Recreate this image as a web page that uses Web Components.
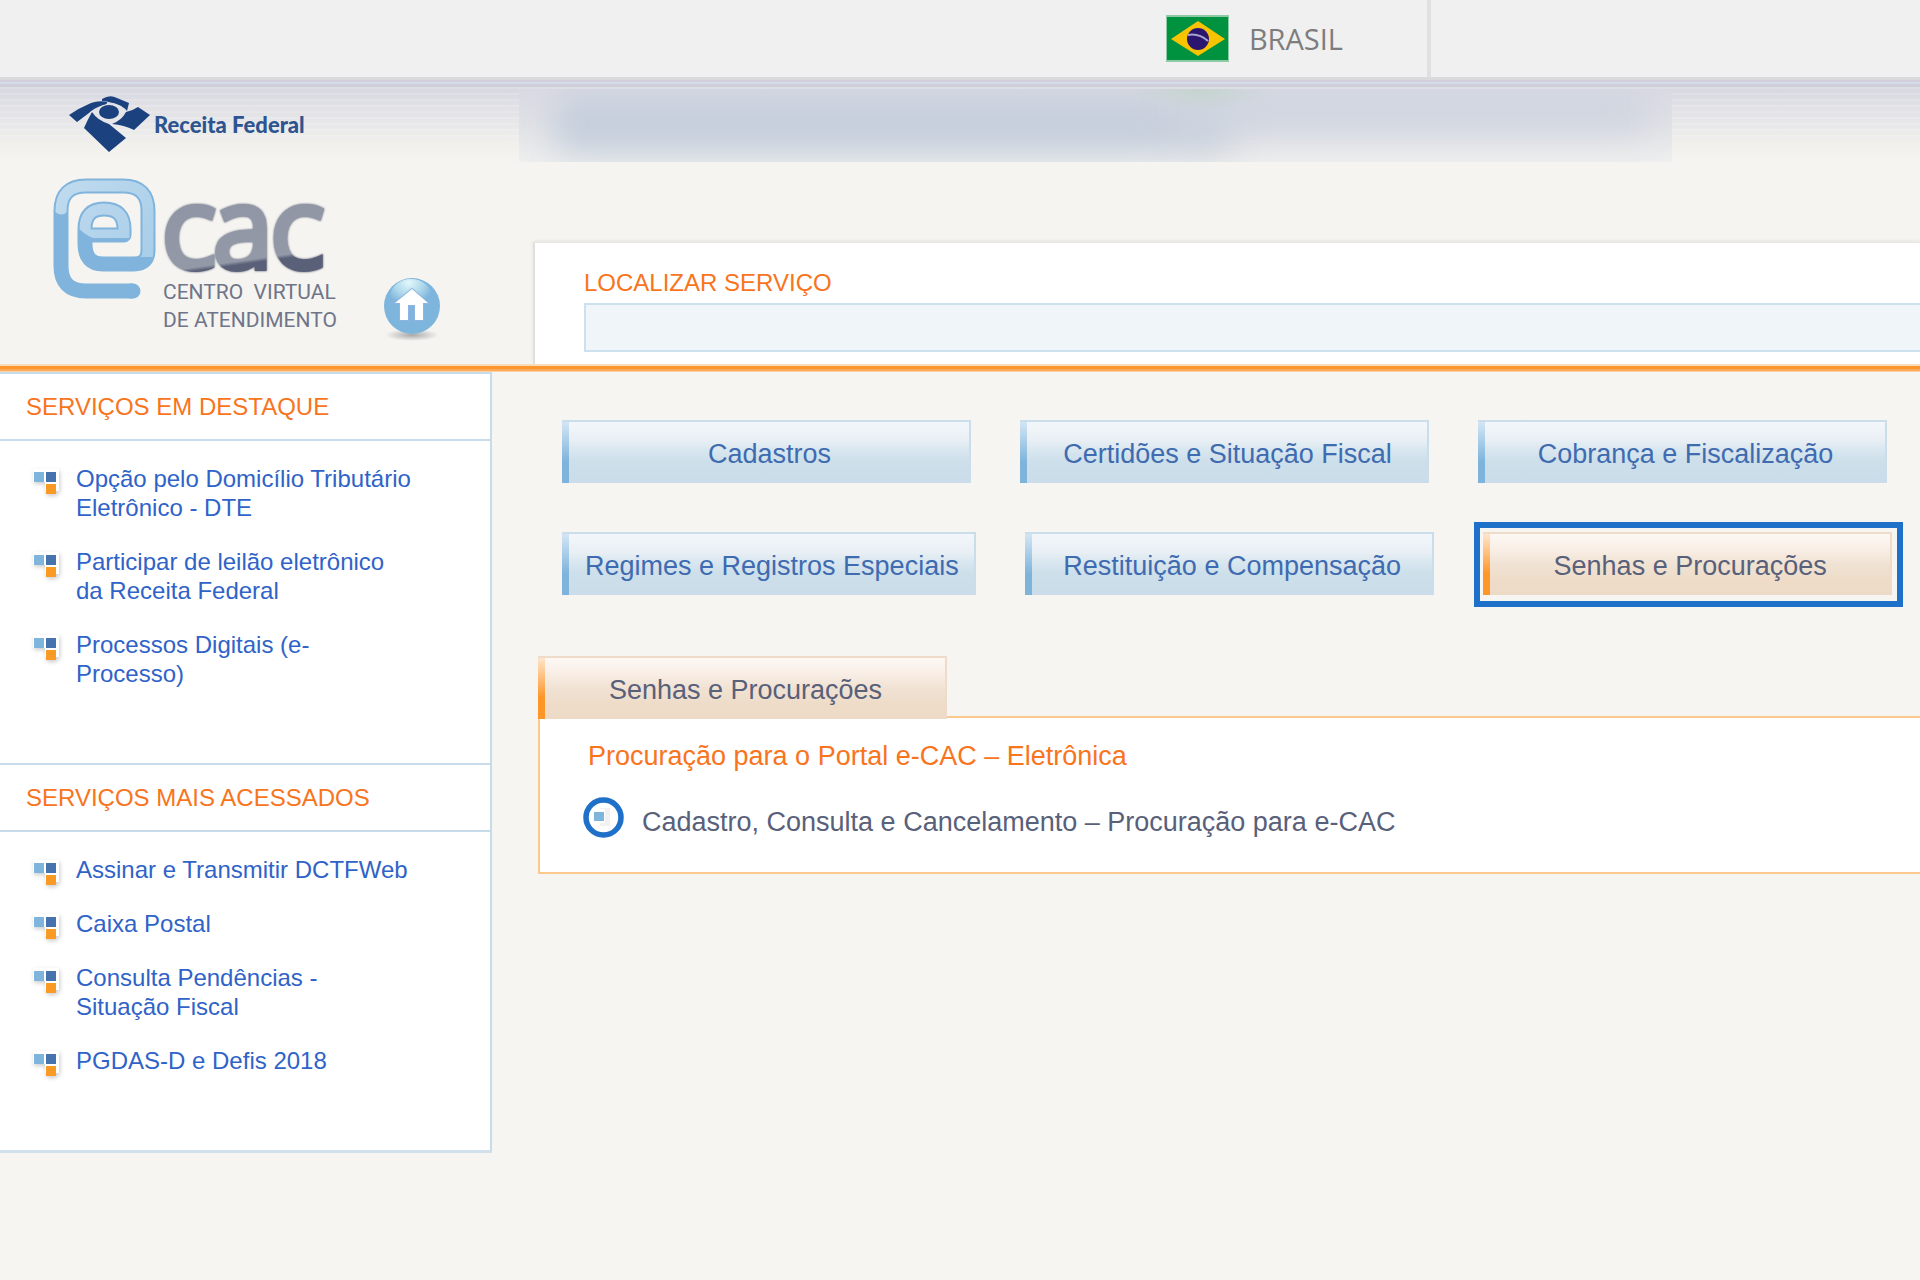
<!DOCTYPE html>
<html lang="pt-BR">
<head>
<meta charset="utf-8">
<meta name="viewport" content="width=device-width, initial-scale=1">
<title>e-CAC - Centro Virtual de Atendimento</title>
<style>
  body {
    margin: 0;
    min-height: 100vh;
    background-color: #f6f5f1;
    font-family: "Liberation Sans", Arial, sans-serif;
    font-size: 24px;
    line-height: 29px;
    --orange: #f8741d;
    --link: #2f63c8;
    --line: #c6dcea;
    --ink: #59607a;
    --mark: #1e70c8;
    --sidebar: 492px;
  }
  .layout {
    display: grid;
    grid-template-columns: var(--sidebar) 1fr;
    align-items: start;
  }
  .categories {
    display: flex;
    flex-wrap: wrap;
    gap: 49px;
    padding: 48px 0 0 70px;
  }
</style>
</head>
<body>
  <brasil-bar></brasil-bar>
  <ecac-header></ecac-header>
  <div class="layout">
    <aside-box>
      <service-group heading="SERVIÇOS EM DESTAQUE">
        <service-link>Opção pelo Domicílio Tributário Eletrônico - DTE</service-link>
        <service-link>Participar de leilão eletrônico da Receita Federal</service-link>
        <service-link>Processos Digitais (e-Processo)</service-link>
      </service-group>
      <service-group heading="SERVIÇOS MAIS ACESSADOS">
        <service-link>Assinar e Transmitir DCTFWeb</service-link>
        <service-link>Caixa Postal</service-link>
        <service-link>Consulta Pendências - Situação Fiscal</service-link>
        <service-link>PGDAS-D e Defis 2018</service-link>
      </service-group>
    </aside-box>
    <main>
      <nav class="categories">
        <category-button>Cadastros</category-button>
        <category-button>Certidões e Situação Fiscal</category-button>
        <category-button>Cobrança e Fiscalização</category-button>
        <category-button>Regimes e Registros Especiais</category-button>
        <category-button>Restituição e Compensação</category-button>
        <category-button active marked>Senhas e Procurações</category-button>
      </nav>
      <service-panel>
        <category-button slot="tab" active>Senhas e Procurações</category-button>
        <span slot="title">Procuração para o Portal e-CAC – Eletrônica</span>
        <panel-link>Cadastro, Consulta e Cancelamento – Procuração para e-CAC</panel-link>
      </service-panel>
    </main>
  </div>

<script>
class EcacElement extends HTMLElement {
  constructor() {
    super();
    this.attachShadow({ mode: 'open' });
  }

  connectedCallback() {
    const template = document.createElement('template');
    template.innerHTML = this.getStyles() + this.getTemplate();
    this.shadowRoot.replaceChildren(template.content.cloneNode(true));
  }
}

class BrasilBar extends EcacElement {
  getTemplate() {
    return `
      <div class="country">
        <svg width="63" height="47" viewBox="0 0 63 47" aria-hidden="true">
          <rect width="63" height="47" fill="#8fcaa6"/>
          <rect x="1" y="2" width="61" height="43" fill="#00923f"/>
          <path d="M5 24 32 6 59 24 32 41Z" fill="#f8c300"/>
          <circle cx="32" cy="24" r="11" fill="#2b166f"/>
          <path d="M22 20Q33 18 42 26" fill="none" stroke="#a9a2cf" stroke-width="2"/>
        </svg>
        <span>BRASIL</span>
      </div>
    `;
  }
  getStyles() {
    return `
      <style>
      :host {
        display: grid;
        grid-template-columns: 1fr 489px;
        height: 77px;
        background-color: #f0f0f0;
      }
      .country {
        display: flex;
        align-items: center;
        justify-content: flex-end;
        gap: 20px;
        padding-right: 84px;
        border-right: 4px solid #e0e0e0;
        font-family: "Open Sans", "Noto Sans", sans-serif;
        font-size: 29px;
        color: #7d7d7d;
      }
      </style>
    `;
  }
}

class EcacHeader extends EcacElement {
  getTemplate() {
    return `
      <header>
        <ecac-brand></ecac-brand>
        <div class="right">
          <user-strip></user-strip>
          <service-search></service-search>
        </div>
      </header>
      <div class="rule"></div>
    `;
  }
  getStyles() {
    return `
      <style>
      :host {
        display: block;
      }
      header {
        display: grid;
        grid-template-columns: var(--sidebar) 1fr;
        height: 287px;
        background:
          linear-gradient(#dadadc 0 3px, #d0cfdb 3px 5px, #d4dce7 5px 7px, #cfcedb 7px 10px, transparent 10px),
          repeating-linear-gradient(transparent 0 4px, rgba(255, 255, 255, .15) 4px 6px) 0 0 / 100% 64px no-repeat,
          linear-gradient(#d7d7e1 10px, #dfdfe5 26px, #e9e9ea 50px, #f2f0ec 68px, #f5f4f0 86px);
      }
      .right {
        display: flex;
        flex-direction: column;
        justify-content: space-between;
      }
      .rule {
        height: 8px;
        background: linear-gradient(#f9dcb9 0 2px, #fb962c 2px 5px, #fdab58 5px 7px, #fbd3a6 7px);
      }
      </style>
    `;
  }
}

class EcacBrand extends EcacElement {
  getTemplate() {
    return `
      <a class="receita" href="#receita">
        <svg width="81" height="56" viewBox="0 0 81 56" fill="#1b427f" aria-hidden="true">
          <path d="M0 19Q10 12 22 7Q30 4 38 6Q39 8 34 9Q25 12 20 17L8 26Z"/>
          <path d="M33 3Q41-2 48 2L60 7 58 15Q52 7 33 5Z"/>
          <ellipse cx="40" cy="16" rx="10" ry="7"/>
          <path d="M69 11 81 19 65 34Q55 29 43 28Q53 24 57 16Q63 15 69 11Z"/>
          <path d="M23 16Q19 23 15 32L40 56 57 42 40 28Q28 24 23 16Z"/>
        </svg>
        <span>Receita Federal</span>
      </a>
      <div class="row">
        <svg class="symbol" width="103" height="121" viewBox="0 0 103 121" fill="none" aria-hidden="true">
          <defs>
            <linearGradient id="gloss" x1="0" y1="0" x2="1" y2="1">
              <stop offset="0" stop-color="#bfdaee"/>
              <stop offset="1" stop-color="#a5cce8"/>
            </linearGradient>
            <clipPath id="upper">
              <path d="M0 0H103V79H82V60H40Q30 56 24 48L14 34Q8 40 0 32Z"/>
            </clipPath>
            <path id="swirl" d="M80 113H33Q8 113 8 88V33Q8 8 33 8H70Q95 8 95 33V72Q95 86 81 86H50Q32 86 32 66V51Q32 31 51 31Q71 31 71 51V57H34"/>
          </defs>
          <use href="#swirl" stroke="#80b4dc" stroke-width="15" stroke-linejoin="round"/>
          <path d="M78 113H80" stroke="#80b4dc" stroke-width="15" stroke-linecap="round"/>
          <use href="#swirl" stroke="url(#gloss)" stroke-width="11" clip-path="url(#upper)"/>
        </svg>
        <div class="wordmark">
          <span class="cac">cac</span>
          <span>CENTRO&nbsp; VIRTUAL</span>
          <span>DE ATENDIMENTO</span>
        </div>
        <a class="home" href="#inicio" aria-label="Início">
          <svg width="57" height="64" viewBox="0 0 57 64">
            <defs>
              <radialGradient id="ball" cx=".45" cy=".1" r=".6">
                <stop offset="0" stop-color="#e2f7fa"/>
                <stop offset=".6" stop-color="#abd6ea"/>
                <stop offset="1" stop-color="#7eb5dc"/>
              </radialGradient>
              <radialGradient id="shade">
                <stop offset="0" stop-color="#a8a8a8"/>
                <stop offset="1" stop-color="#a8a8a8" stop-opacity="0"/>
              </radialGradient>
            </defs>
            <ellipse cx="28" cy="57" rx="27" ry="6" fill="url(#shade)"/>
            <circle cx="28" cy="28" r="28" fill="#7eb5dc"/>
            <ellipse cx="27" cy="19" rx="21" ry="18" fill="url(#ball)"/>
            <path d="M28 11 44 25H39V42H31V27H24V42H16V25H11Z" fill="#fff" stroke="#8fb4e3" stroke-width="2" paint-order="stroke"/>
          </svg>
        </a>
      </div>
    `;
  }
  getStyles() {
    return `
      <style>
      :host {
        display: block;
        padding-top: 19px;
      }
      a {
        text-decoration: none;
      }
      svg {
        display: block;
      }
      .receita {
        display: flex;
        align-items: center;
        gap: 4px;
        padding-left: 69px;
        font-family: Lato, sans-serif;
        font-size: 22px;
        font-weight: 900;
        color: #2d5490;
      }
      .row {
        display: flex;
        align-items: flex-end;
        height: 164px;
        margin-top: 26px;
        padding-left: 53px;
      }
      .symbol {
        align-self: flex-start;
      }
      .wordmark {
        display: flex;
        flex-direction: column;
        align-self: flex-start;
        align-items: flex-start;
        width: 170px;
        margin-left: 7px;
        font-family: Roboto, sans-serif;
        font-size: 21px;
        line-height: 28px;
        white-space: nowrap;
        color: #6f7589;
      }
      .cac {
        padding: 0 6px 0 0;
        font-family: "Open Sans", sans-serif;
        font-size: 108px;
        font-weight: 300;
        line-height: 96px;
        padding-bottom: 4px;
        color: transparent;
        background: linear-gradient(172deg, #8f95a4 20%, #9399a7 76%, #5a6077 79%);
        background-clip: text;
        -webkit-background-clip: text;
        -webkit-text-stroke: 8px transparent;
        filter: drop-shadow(0 0 1px #5a6077);
      }
      .home {
        margin-left: 51px;
      }
      </style>
    `;
  }
}

// Smudged strip where the signed-in user's data goes
class UserStrip extends EcacElement {
  getTemplate() {
    return `<i class="name"></i><i class="code"></i>`;
  }
  getStyles() {
    return `
      <style>
      :host {
        position: relative;
        display: block;
        overflow: hidden;
        height: 73px;
        margin: 12px 0 0 27px;
        max-width: 1153px;
        background:
          linear-gradient(#dadae3 0, #e0e1e6 45%, #eeefee);
      }
      i {
        position: absolute;
        filter: blur(18px);
      }
      .name {
        inset: 8px 440px 10px 36px;
        background: linear-gradient(90deg, #c3cddb 85%, #ccd2dd);
      }
      .code {
        inset: 2px 24px 30px 660px;
        background-color: #ced4df;
      }
      :host::after {
        content: '';
        position: absolute;
        inset: 0;
        background: radial-gradient(ellipse 70px 22px at 681px 0, rgba(190, 212, 196, .6), transparent);
      }
      </style>
    `;
  }
}

class ServiceSearch extends EcacElement {
  getTemplate() {
    return `
      <label for="busca">LOCALIZAR SERVIÇO</label>
      <input id="busca" type="text">
    `;
  }
  getStyles() {
    return `
      <style>
      :host {
        display: flex;
        flex-direction: column;
        gap: 6px;
        margin-left: 41px;
        padding: 25px 0 12px 49px;
        background-color: #fff;
        border-top: 1px solid #e9e8e5;
        border-left: 2px solid #e0e0df;
        box-shadow: 0 -1px 3px #e4e3df;
      }
      label {
        color: var(--orange);
      }
      input {
        box-sizing: border-box;
        width: 100%;
        height: 49px;
        padding: 0 12px;
        border: 2px solid #cde0ed;
        border-right: 0;
        border-radius: 0;
        background-color: #f0f5fa;
        font: inherit;
        color: var(--ink);
      }
      </style>
    `;
  }
}

class AsideBox extends EcacElement {
  getTemplate() {
    return `<aside><slot></slot></aside>`;
  }
  getStyles() {
    return `
      <style>
      :host {
        display: block;
      }
      aside {
        background-color: #fff;
        border-right: 2px solid var(--line);
        border-bottom: 3px solid #d0e1ec;
      }
      </style>
    `;
  }
}

class ServiceGroup extends EcacElement {
  getTemplate() {
    return `
      <h2>${this.getAttribute('heading')}</h2>
      <div class="list"><slot></slot></div>
    `;
  }
  getStyles() {
    return `
      <style>
      :host {
        display: block;
      }
      h2 {
        margin: 0;
        padding: 18px 26px;
        border-top: 2px solid var(--line);
        border-bottom: 2px solid var(--line);
        font-size: 24px;
        font-weight: 400;
        color: var(--orange);
      }
      .list {
        display: flex;
        flex-direction: column;
        gap: 25px;
        padding: 23px 76px 75px 30px;
      }
      </style>
    `;
  }
}

class ServiceLink extends EcacElement {
  getTemplate() {
    return `
      <a href="#servico">
        <svg width="36" height="32" viewBox="0 0 36 32" aria-hidden="true">
          <path d="M3 5H29V27H15V18H3Z" fill="#fff"/>
          <path d="M4 8H14V18H4Z" fill="#7fb5dc"/>
          <path d="M16 8H26V18H16Z" fill="#4673ae"/>
          <path d="M16 20H26V30H16Z" fill="#f99a25"/>
        </svg>
        <span><slot></slot></span>
      </a>
    `;
  }
  getStyles() {
    return `
      <style>
      :host {
        display: block;
      }
      a {
        display: flex;
        gap: 10px;
        color: var(--link);
        text-decoration: none;
      }
      svg {
        flex: none;
        margin-bottom: -3px;
        filter: drop-shadow(1px 2px 2px rgba(0, 0, 0, .2));
      }
      </style>
    `;
  }
}

class CategoryButton extends EcacElement {
  getTemplate() {
    return `<button type="button"><slot></slot></button>`;
  }
  getStyles() {
    return `
      <style>
      :host {
        --edge: #c9ddea;
        --bar: #7eb4dc;
        --bar-light: #d3e5f3;
        --fill: #f3f7fb, #e9eff5 30%, #d9e7f0 45%, #cddfea 65%, #cadce9;
        position: relative;
        display: block;
      }
      :host([active]) {
        --edge: #eedcc9;
        --bar: #ff9628;
        --bar-light: #fee5cd;
        --fill: #fdf8f5, #f8ede4 28%, #f0e2d3 50%, #eedcc9 75%, #eddac6;
      }
      button {
        display: block;
        box-sizing: border-box;
        min-width: 409px;
        height: 63px;
        padding: 2px 15px 0 23px;
        border: solid var(--edge);
        border-width: 2px 2px 0 0;
        background:
          linear-gradient(var(--bar-light), var(--bar) 65%) 0 0 / 7px 100% no-repeat,
          linear-gradient(var(--fill));
        font: 27px/32px "Liberation Sans", Arial, sans-serif;
        color: #3f6bb0;
        cursor: pointer;
      }
      :host([active]) button {
        color: var(--ink);
      }
      :host([marked])::after {
        content: '';
        position: absolute;
        inset: -10px -11px -12px -9px;
        border: 6px solid var(--mark);
        pointer-events: none;
      }
      </style>
    `;
  }
}

class ServicePanel extends EcacElement {
  getTemplate() {
    return `
      <slot name="tab"></slot>
      <section>
        <h3><slot name="title"></slot></h3>
        <slot></slot>
      </section>
    `;
  }
  getStyles() {
    return `
      <style>
      :host {
        display: flex;
        flex-direction: column;
        align-items: flex-start;
        margin: 61px 0 0 46px;
        font-size: 27px;
        line-height: 32px;
      }
      ::slotted([slot="tab"]) {
        z-index: 1;
      }
      section {
        box-sizing: border-box;
        width: 100%;
        margin-top: -3px;
        padding: 22px 0 34px 48px;
        background-color: #fff;
        border: 2px solid #fdc88e;
        border-right: 0;
      }
      h3 {
        margin: 0 0 25px;
        font-size: 27px;
        font-weight: 400;
        color: var(--orange);
      }
      </style>
    `;
  }
}

class PanelLink extends EcacElement {
  getTemplate() {
    return `
      <a href="#procuracao">
        <svg width="41" height="41" viewBox="0 0 41 41" aria-hidden="true">
          <path d="M17 11H27V29H17Z" fill="#f1f1f1"/>
          <path d="M9 12H22V26H9Z" fill="#fff"/>
          <path d="M11 15H21V24H11Z" fill="#7fb5dc"/>
          <circle cx="20.5" cy="20.5" r="17.5" fill="none" stroke="#1e70c8" stroke-width="5.5"/>
        </svg>
        <span><slot></slot></span>
      </a>
    `;
  }
  getStyles() {
    return `
      <style>
      :host {
        display: block;
        margin-left: -5px;
      }
      a {
        display: flex;
        align-items: flex-end;
        gap: 18px;
        color: var(--ink);
        text-decoration: none;
      }
      </style>
    `;
  }
}

customElements.define('brasil-bar', BrasilBar);
customElements.define('ecac-header', EcacHeader);
customElements.define('ecac-brand', EcacBrand);
customElements.define('user-strip', UserStrip);
customElements.define('service-search', ServiceSearch);
customElements.define('aside-box', AsideBox);
customElements.define('service-group', ServiceGroup);
customElements.define('service-link', ServiceLink);
customElements.define('category-button', CategoryButton);
customElements.define('service-panel', ServicePanel);
customElements.define('panel-link', PanelLink);
</script>
</body>
</html>
